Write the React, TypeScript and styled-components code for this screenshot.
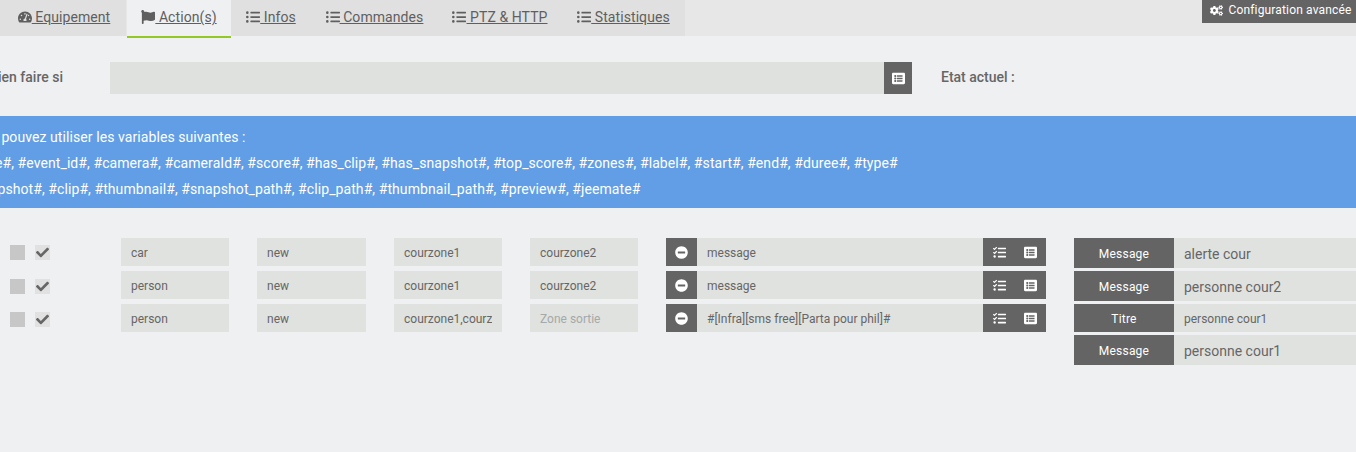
import React from 'react';
import styled, { createGlobalStyle } from 'styled-components';
import { FaCheck, FaCogs, FaFlag, FaListAlt, FaListUl, FaMinusCircle, FaTachometerAlt, FaTasks } from 'react-icons/fa';

const GlobalStyle = createGlobalStyle`
  html, body {
    margin: 0;
    padding: 0;
    background: #eff0f2;
    font-family: Roboto, "Liberation Sans", sans-serif;
    overflow: hidden;
  }
`;

const Page = styled.div`
  width: 1356px;
  height: 452px;
  overflow: hidden;
  position: relative;
  color: #666;
`;

const Nav = styled.nav`
  display: flex;
  height: 36px;
  background: #e7e7e8;
`;

const Tab = styled.a<{ $active?: boolean; $width: number }>`
  display: block;
  box-sizing: border-box;
  width: ${props => props.$width}px;
  height: ${props => props.$active ? '38px' : '36px'};
  margin-left: ${props => props.$active ? '1px' : '0'};
  background: ${props => props.$active ? '#eff0f2' : '#dfe0df'};
  border-bottom: ${props => props.$active ? '2px solid #93c927' : 'none'};
  font-size: 14px;
  letter-spacing: 0.08px;
  line-height: 34px;
  text-align: center;
  color: #5f5f5f;
  text-decoration: underline;
  white-space: nowrap;
  position: relative;

  &:first-child {
    padding-left: 2px;
  }

  svg {
    font-size: 14px;
    vertical-align: -2px;
  }
`;

const ConfigButton = styled.a`
  position: absolute;
  top: 0;
  right: 0;
  width: 154px;
  height: 23px;
  padding: 0 0 3px 3px;
  box-sizing: border-box;
  display: flex;
  align-items: center;
  justify-content: center;
  gap: 6px;
  background: #646464;
  color: #fff;
  font-size: 12px;
  letter-spacing: 0.15px;
  white-space: nowrap;

  svg {
    font-size: 13px;
  }
`;

const ConditionRow = styled.div`
  display: flex;
  align-items: center;
  height: 32px;
  margin-top: 26px;
`;

const ConditionLabel = styled.label`
  display: flex;
  justify-content: flex-end;
  width: 110px;
  padding: 0 47px 2px 0;
  box-sizing: border-box;
  font-size: 14px;
  font-weight: 500;
  white-space: nowrap;
`;

const ConditionInput = styled.div`
  width: 774px;
  height: 32px;
  background: #dfe1df;
`;

const DarkButton = styled.span<{ $width: number }>`
  display: flex;
  align-items: center;
  justify-content: center;
  flex: none;
  width: ${props => props.$width}px;
  height: 100%;
  background: #646464;
  color: #fff;
  font-size: 13px;
`;

const StateLabel = styled.span`
  margin-left: 29px;
  padding-bottom: 2px;
  font-size: 14px;
  font-weight: 500;
`;

const Alert = styled.div`
  margin-top: 22px;
  height: 92px;
  box-sizing: border-box;
  padding: 8px 0 6px;
  background: #619ee5;
  color: #fff;
  font-size: 14px;
  letter-spacing: 0.08px;
  line-height: 26px;
  white-space: nowrap;
`;

const AlertLine = styled.div`
  margin-left: -34px;
`;

const Actions = styled.div`
  display: flex;
  align-items: flex-start;
  margin-top: 30px;
`;

const ActionList = styled.div`
  display: flex;
  flex-direction: column;
  gap: 5px;
  width: 1074px;
  flex: none;
`;

const ActionRow = styled.div`
  display: flex;
  align-items: center;
  height: 28px;
  padding-left: 10px;
`;

const Check = styled.span<{ $on?: boolean }>`
  display: flex;
  align-items: center;
  justify-content: center;
  width: 15px;
  height: 15px;
  margin-right: 10px;
  background: ${props => props.$on ? '#e0e1e0' : '#c7c7c7'};
  color: #666;
  font-size: 13px;

  ${ActionRow}:not(:first-child) & {
    margin-top: 2px;
  }
`;

const Filters = styled.div`
  display: flex;
  gap: 28px;
  margin-left: 61px;
`;

const Field = styled.input<{ $width?: number }>`
  box-sizing: border-box;
  width: ${props => props.$width ?? 108}px;
  height: 28px;
  padding: 2px 10px 0;
  border: none;
  border-radius: 0;
  outline: none;
  background: #e0e2e0;
  color: #666;
  font-family: Roboto, "Liberation Sans", sans-serif;
  font-size: 12px;

  &::placeholder {
    color: #a5a9a9;
    opacity: 1;
  }
`;

const CommandGroup = styled.div`
  display: flex;
  width: 380px;
  height: 28px;
  margin-left: 28px;
`;

const CommandField = styled(Field)`
  flex: 1;
  min-width: 0;
`;

const ParamColumn = styled.div`
  display: flex;
  flex-direction: column;
  gap: 3px;
  flex: 1;
`;

const ParamRow = styled.div<{ $small?: boolean }>`
  display: flex;
  height: ${props => props.$small ? '28px' : '30px'};
`;

const ParamName = styled.span`
  display: flex;
  align-items: center;
  justify-content: center;
  width: 100px;
  flex: none;
  padding-top: 1px;
  background: #646464;
  color: #fff;
  font-size: 12px;
  font-weight: 400;
  letter-spacing: 0.2px;
`;

const ParamField = styled.input<{ $small?: boolean }>`
  flex: 1;
  min-width: 0;
  padding: 2px 10px 0;
  border: none;
  outline: none;
  background: #e0e2e0;
  color: #666;
  font-family: Roboto, "Liberation Sans", sans-serif;
  font-size: ${props => props.$small ? '12px' : '14px'};
`;

const rows = [
  { filters: ['car', 'new', 'courzone1', 'courzone2'], command: 'message' },
  { filters: ['person', 'new', 'courzone1', 'courzone2'], command: 'message' },
  { filters: ['person', 'new', 'courzone1,courzone2', ''], command: '#[Infra][sms free][Parta pour phil]#' },
];

const params = [
  { name: 'Message', value: 'alerte cour' },
  { name: 'Message', value: 'personne cour2' },
  { name: 'Titre', value: 'personne cour1', small: true },
  { name: 'Message', value: 'personne cour1' },
];

const App: React.FC = () => (
  <Page>
    <GlobalStyle />
    <Nav>
      <Tab $width={126}><FaTachometerAlt /> Equipement</Tab>
      <Tab $width={104} $active><FaFlag /> Action(s)</Tab>
      <Tab $width={80}><FaListUl /> Infos</Tab>
      <Tab $width={127}><FaListUl /> Commandes</Tab>
      <Tab $width={124}><FaListUl /> PTZ &amp; HTTP</Tab>
      <Tab $width={123}><FaListUl /> Statistiques</Tab>
    </Nav>
    <ConfigButton><FaCogs /> Configuration avancée</ConfigButton>

    <ConditionRow>
      <ConditionLabel>Ne rien faire si</ConditionLabel>
      <ConditionInput />
      <DarkButton $width={28}><FaListAlt /></DarkButton>
      <StateLabel>Etat actuel :</StateLabel>
    </ConditionRow>

    <Alert>
      <AlertLine>Vous pouvez utiliser les variables suivantes :</AlertLine>
      <AlertLine>#date#, #event_id#, #camera#, #cameraId#, #score#, #has_clip#, #has_snapshot#, #top_score#, #zones#, #label#, #start#, #end#, #duree#, #type#</AlertLine>
      <AlertLine>#snapshot#, #clip#, #thumbnail#, #snapshot_path#, #clip_path#, #thumbnail_path#, #preview#, #jeemate#</AlertLine>
    </Alert>

    <Actions>
      <ActionList>
        {rows.map((row, i) => (
          <ActionRow key={i}>
            <Check />
            <Check $on><FaCheck /></Check>
            <Filters>
              {row.filters.map((value, j) => (
                <Field key={j} $width={j === 1 ? 109 : 108} readOnly value={value} placeholder={j === 3 ? 'Zone sortie' : undefined} />
              ))}
            </Filters>
            <CommandGroup>
              <DarkButton $width={31}><FaMinusCircle /></DarkButton>
              <CommandField readOnly value={row.command} />
              <DarkButton $width={32}><FaTasks /></DarkButton>
              <DarkButton $width={31}><FaListAlt /></DarkButton>
            </CommandGroup>
          </ActionRow>
        ))}
      </ActionList>
      <ParamColumn>
        {params.map((param, i) => (
          <ParamRow key={i} $small={param.small}>
            <ParamName>{param.name}</ParamName>
            <ParamField readOnly value={param.value} $small={param.small} />
          </ParamRow>
        ))}
      </ParamColumn>
    </Actions>
  </Page>
);

export default App;
